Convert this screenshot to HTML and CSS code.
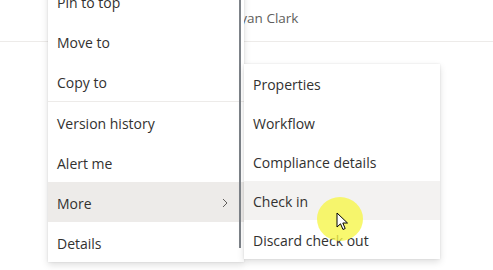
FILE: index.html
```html
<!DOCTYPE html>
<html>
<head>
<meta charset="utf-8">
<link rel="stylesheet" href="styles.css">
</head>
<body>
<div class="page">
  <div class="header">
    <span class="modified">Ryan Clark</span>
  </div>

  <div class="menu main-menu">
    <div class="item">Pin to top</div>
    <div class="item">Move to</div>
    <div class="item">Copy to</div>
    <div class="sep"></div>
    <div class="item">Version history</div>
    <div class="item">Alert me</div>
    <div class="item active">More
      <svg class="chev" width="6" height="10" viewBox="0 0 6 10"><path d="M1 1 L5 5 L1 9" fill="none" stroke="#605e5c" stroke-width="1"/></svg>
    </div>
    <div class="item">Details</div>
    <div class="scrollbar"></div>
  </div>

  <div class="menu sub-menu">
    <div class="item">Properties</div>
    <div class="item">Workflow</div>
    <div class="item">Compliance details</div>
    <div class="item hover">Check in</div>
    <div class="item">Discard check out</div>
  </div>

  <div class="cursor-glow"></div>
  <svg class="cursor" width="14" height="20" viewBox="0 0 14 20">
    <path d="M1 1 L1 15 L4.5 11.8 L7 17.5 L9.2 16.5 L6.8 11 L11.5 11 Z" fill="#fff" stroke="#000" stroke-width="1" stroke-linejoin="round"/>
  </svg>
</div>
</body>
</html>
```

FILE: styles.css
```css
html, body {
  margin: 0;
  padding: 0;
  background: #fff;
}
body {
  font-family: "Segoe UI", "Open Sans", "Noto Sans", sans-serif;
  font-size: 14px;
  color: #323130;
  width: 493px;
  height: 270px;
  overflow: hidden;
}
.page {
  position: relative;
  width: 493px;
  height: 270px;
}
.header {
  height: 42px;
  border-bottom: 1px solid #edebe9;
  display: flex;
  align-items: center;
  padding-left: 232px;
  box-sizing: border-box;
}
.modified {
  color: #605e5c;
  font-size: 13.5px;
  margin-top: -6px;
}
.menu {
  position: absolute;
  background: #fff;
  box-shadow: 0 3px 7px rgba(0,0,0,0.13), 0 0 2px rgba(0,0,0,0.10);
}
.main-menu {
  left: 48px;
  top: -19px;
  width: 196px;
}
.sub-menu {
  left: 244px;
  top: 64px;
  width: 196px;
}
.item {
  height: 40px;
  box-sizing: border-box;
  padding-top: 2px;
  display: flex;
  align-items: center;
  padding-left: 9px;
  padding-right: 12px;
  font-size: 14px;
  color: #323130;
  white-space: nowrap;
}
.sub-menu .item {
  height: 39px;
}
.item.active {
  background: #edebe9;
}
.item.hover {
  background: #f3f2f1;
}
.chev {
  margin-left: auto;
  margin-right: 4px;
}
.sep {
  height: 1px;
  background: #edebe9;
}
.scrollbar {
  position: absolute;
  left: 191px;
  top: 0;
  width: 2px;
  height: 267px;
  background: #7d8288;
}
.cursor-glow {
  position: absolute;
  left: 317px;
  top: 197px;
  width: 46px;
  height: 44px;
  border-radius: 50%;
  background: rgba(246, 246, 70, 0.78);
}
.cursor {
  position: absolute;
  left: 336px;
  top: 212px;
}
```
